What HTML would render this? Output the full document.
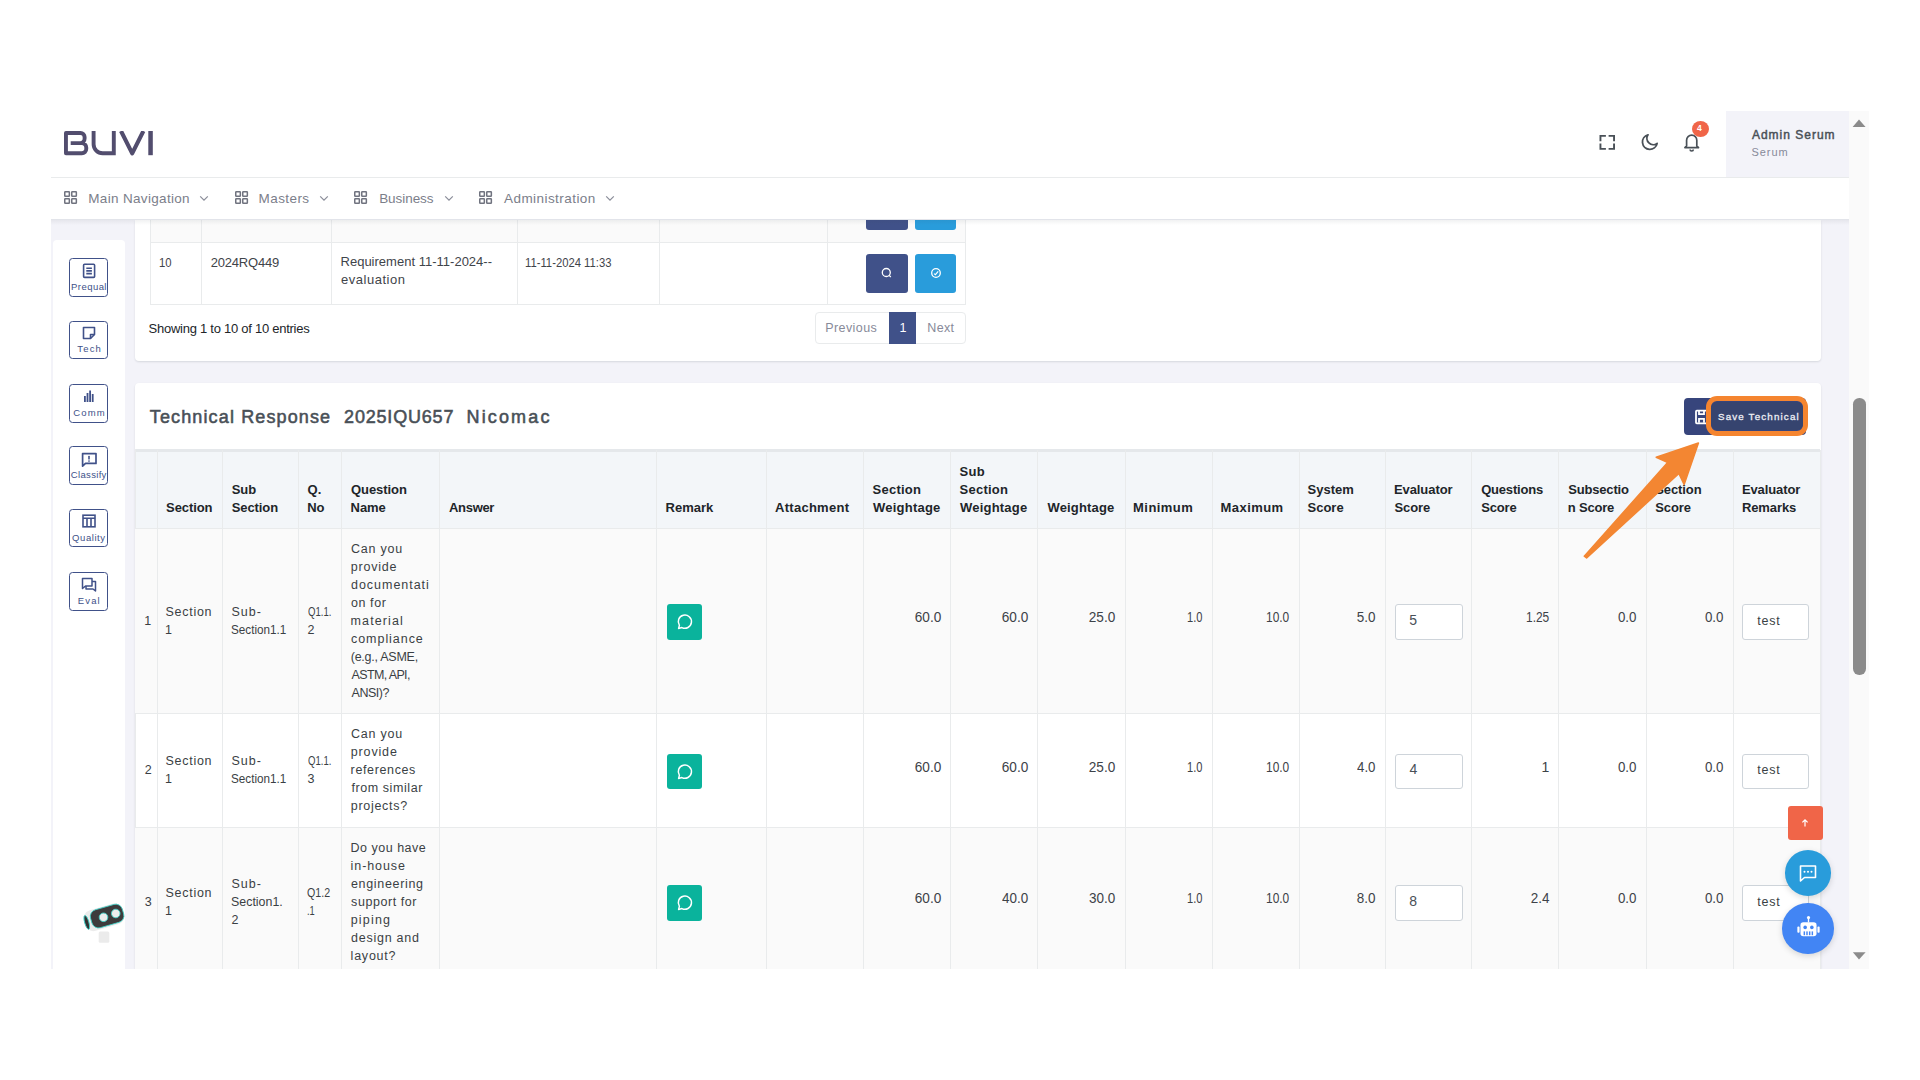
<!DOCTYPE html>
<html><head><meta charset="utf-8"><title>BUVI</title>
<style>
html,body{margin:0;padding:0;}
body{width:1920px;height:1080px;overflow:hidden;background:#fff;position:relative;font-family:"Liberation Sans",sans-serif;}
.r{position:absolute;}
.t{position:absolute;white-space:nowrap;}
</style></head><body>
<div class="r" style="left:51px;top:111px;width:1798px;height:66px;background:#fff;"></div>
<div class="r" style="left:51px;top:177px;width:1798px;height:1px;background:#e9ebec;"></div>
<div class="r" style="left:1726px;top:111px;width:123px;height:66px;background:#f3f3f9;"></div>
<div class="r" style="left:51px;top:178px;width:1798px;height:42px;background:#fff;"></div>
<div class="r" style="left:51px;top:220px;width:1798px;height:749px;background:#f3f3f9;"></div>
<div class="r" style="left:53px;top:240px;width:72px;height:729px;background:#fff;border-radius:4px 4px 0 0;"></div>
<div class="r" style="left:135px;top:220px;width:1686px;height:140.6px;background:#fff;box-shadow:0 1px 2px rgba(56,65,74,.15);border-radius:0 0 4px 4px;"></div>
<div class="r" style="left:135px;top:383px;width:1686px;height:586px;background:#fff;box-shadow:0 1px 2px rgba(56,65,74,.15);border-radius:4px 4px 0 0;"></div>
<svg class="r" style="left:64.2px;top:130.5px" width="90" height="25" viewBox="0 0 90 25">
<g fill="none" stroke="#524d6e" stroke-width="3.9">
<path d="M18,22.25 H1.95 V1.95 H16.5 A4.2,4.2 0 0 1 20.6,6.1 V7.6 A4.4,4.4 0 0 1 16.2,12.1 H6.7 M16.2,12.1 H17.8 A4.4,4.4 0 0 1 22.25,16.5 V17.9 A4.4,4.4 0 0 1 17.8,22.25" stroke-linejoin="round"/>
<path d="M29.6,0 V13.2 A9,9 0 0 0 38.6,22.25 H49.8 V0"/>
<path d="M57.0,0 L68.2,22.3 L79.4,0" stroke-width="4.1" stroke-linejoin="round"/>
</g>
<rect x="84.3" y="0" width="4.5" height="24.2" fill="#524d6e"/>
</svg>
<svg class="r" style="left:1597px;top:133px" width="20" height="20" viewBox="0 0 20 20"><g fill="none" stroke="#495057" stroke-width="1.9"><path d="M3.45,8.3 V2.85 H8.9 M11.6,2.85 H17.05 V8.3 M17.05,10.4 V15.85 H11.6 M8.9,15.85 H3.45 V10.4"/></g></svg>
<svg class="r" style="left:1639px;top:132px" width="22" height="22" viewBox="0 0 22 22"><path d="M9,2.8 A7.4,7.4 0 1 0 18.1,11.5 A6.4,6.4 0 0 1 9,2.8 Z" fill="none" stroke="#495057" stroke-width="1.8" stroke-linejoin="round"/></svg>
<svg class="r" style="left:1682px;top:132px" width="20" height="22" viewBox="0 0 20 22"><g fill="none" stroke="#495057" stroke-width="1.7" stroke-linejoin="round"><path d="M2.9,15.6 L4.6,13.9 V8.3 A5.1,5.1 0 0 1 14.8,8.3 V13.9 L16.5,15.6 Z"/><path d="M8.1,17.4 A1.6,1.6 0 0 0 11.3,17.4"/></g></svg>
<div class="r" style="left:1691.8px;top:120.8px;width:17.0px;height:16.0px;background:#f06548;border-radius:50%;"></div>
<div class="t" style="left:1697.08px;top:118px;font-size:8.5px;line-height:20px;color:#fff;font-weight:700;">4</div>
<div class="t" style="left:1751.90px;top:125px;font-size:12px;line-height:20px;color:#495057;letter-spacing:1.0px;-webkit-text-stroke:0.45px #495057;">Admin Serum</div>
<div class="t" style="left:1751.50px;top:142px;font-size:11px;line-height:20px;color:#878a99;letter-spacing:0.938px;">Serum</div>
<svg class="r" style="left:63.8px;top:191px" width="14" height="14" viewBox="0 0 14 14"><g fill="none" stroke="#70737f" stroke-width="1.5"><rect x="0.75" y="0.75" width="4.6" height="4.6" rx="0.6"/><rect x="7.75" y="0.75" width="4.6" height="4.6" rx="0.6"/><rect x="0.75" y="7.75" width="4.6" height="4.6" rx="0.6"/><rect x="7.75" y="7.75" width="4.6" height="4.6" rx="0.6"/></g></svg>
<div class="t" style="left:88.28px;top:189px;font-size:13.5px;line-height:20px;color:#7b7e8a;letter-spacing:0.325px;">Main Navigation</div>
<svg class="r" style="left:199.3px;top:194.5px" width="10" height="7" viewBox="0 0 10 7"><path d="M1.2,1.3 L5,5.1 L8.8,1.3" fill="none" stroke="#8a8d99" stroke-width="1.2"/></svg>
<svg class="r" style="left:234.8px;top:191px" width="14" height="14" viewBox="0 0 14 14"><g fill="none" stroke="#70737f" stroke-width="1.5"><rect x="0.75" y="0.75" width="4.6" height="4.6" rx="0.6"/><rect x="7.75" y="0.75" width="4.6" height="4.6" rx="0.6"/><rect x="0.75" y="7.75" width="4.6" height="4.6" rx="0.6"/><rect x="7.75" y="7.75" width="4.6" height="4.6" rx="0.6"/></g></svg>
<div class="t" style="left:258.57px;top:189px;font-size:13.5px;line-height:20px;color:#7b7e8a;letter-spacing:0.421px;">Masters</div>
<svg class="r" style="left:319.3px;top:194.5px" width="10" height="7" viewBox="0 0 10 7"><path d="M1.2,1.3 L5,5.1 L8.8,1.3" fill="none" stroke="#8a8d99" stroke-width="1.2"/></svg>
<svg class="r" style="left:354px;top:191px" width="14" height="14" viewBox="0 0 14 14"><g fill="none" stroke="#70737f" stroke-width="1.5"><rect x="0.75" y="0.75" width="4.6" height="4.6" rx="0.6"/><rect x="7.75" y="0.75" width="4.6" height="4.6" rx="0.6"/><rect x="0.75" y="7.75" width="4.6" height="4.6" rx="0.6"/><rect x="7.75" y="7.75" width="4.6" height="4.6" rx="0.6"/></g></svg>
<div class="t" style="left:379.18px;top:189px;font-size:13.5px;line-height:20px;color:#7b7e8a;letter-spacing:-0.061px;">Business</div>
<svg class="r" style="left:444.2px;top:194.5px" width="10" height="7" viewBox="0 0 10 7"><path d="M1.2,1.3 L5,5.1 L8.8,1.3" fill="none" stroke="#8a8d99" stroke-width="1.2"/></svg>
<svg class="r" style="left:478.6px;top:191px" width="14" height="14" viewBox="0 0 14 14"><g fill="none" stroke="#70737f" stroke-width="1.5"><rect x="0.75" y="0.75" width="4.6" height="4.6" rx="0.6"/><rect x="7.75" y="0.75" width="4.6" height="4.6" rx="0.6"/><rect x="0.75" y="7.75" width="4.6" height="4.6" rx="0.6"/><rect x="7.75" y="7.75" width="4.6" height="4.6" rx="0.6"/></g></svg>
<div class="t" style="left:504.00px;top:189px;font-size:13.5px;line-height:20px;color:#7b7e8a;letter-spacing:0.444px;">Administration</div>
<svg class="r" style="left:604.6px;top:194.5px" width="10" height="7" viewBox="0 0 10 7"><path d="M1.2,1.3 L5,5.1 L8.8,1.3" fill="none" stroke="#8a8d99" stroke-width="1.2"/></svg>
<div class="r" style="left:151px;top:220px;width:814px;height:22px;background:#fafafa;"></div>
<div class="r" style="left:150px;top:220px;width:1px;height:84px;background:#e9ebec;"></div>
<div class="r" style="left:201px;top:220px;width:1px;height:84px;background:#e9ebec;"></div>
<div class="r" style="left:331px;top:220px;width:1px;height:84px;background:#e9ebec;"></div>
<div class="r" style="left:517px;top:220px;width:1px;height:84px;background:#e9ebec;"></div>
<div class="r" style="left:659px;top:220px;width:1px;height:84px;background:#e9ebec;"></div>
<div class="r" style="left:827px;top:220px;width:1px;height:84px;background:#e9ebec;"></div>
<div class="r" style="left:965px;top:220px;width:1px;height:84px;background:#e9ebec;"></div>
<div class="r" style="left:150px;top:242px;width:816px;height:1px;background:#e9ebec;"></div>
<div class="r" style="left:150px;top:304px;width:816px;height:1px;background:#e9ebec;"></div>
<div class="r" style="left:866px;top:220px;width:42px;height:10px;background:#405189;border-radius:0 0 3px 3px;"></div>
<div class="r" style="left:915px;top:220px;width:41px;height:10px;background:#299cdb;border-radius:0 0 3px 3px;"></div>
<div class="t" style="left:158.63px;top:253px;font-size:13px;line-height:20px;color:#3f444a;transform:scaleX(0.8692);transform-origin:left center;">10</div>
<div class="t" style="left:210.68px;top:253px;font-size:13px;line-height:20px;color:#3f444a;letter-spacing:-0.184px;">2024RQ449</div>
<div class="t" style="left:340.50px;top:252px;font-size:13px;line-height:20px;color:#3f444a;letter-spacing:0.011px;">Requirement 11-11-2024--</div>
<div class="t" style="left:341.00px;top:270px;font-size:13px;line-height:20px;color:#3f444a;letter-spacing:0.514px;">evaluation</div>
<div class="t" style="left:525.38px;top:253px;font-size:13px;line-height:20px;color:#3f444a;transform:scaleX(0.8662);transform-origin:left center;">11-11-2024 11:33</div>
<div class="r" style="left:866px;top:254px;width:42px;height:38.5px;background:#405189;border-radius:3px;"></div>
<div class="r" style="left:915px;top:254px;width:41px;height:38.5px;background:#299cdb;border-radius:3px;"></div>
<svg class="r" style="left:880px;top:266px" width="14" height="14" viewBox="0 0 14 14"><circle cx="6.3" cy="6.5" r="4" fill="none" stroke="#fff" stroke-width="1.3"/><path d="M9.2,9.4 L10.8,11" stroke="#fff" stroke-width="1.3"/></svg>
<svg class="r" style="left:928.5px;top:265.5px" width="14" height="14" viewBox="0 0 14 14"><circle cx="7" cy="7" r="4.3" fill="none" stroke="#fff" stroke-width="1.3"/><path d="M5,7.6 L6.4,8.7 L9.2,5.4" fill="none" stroke="#fff" stroke-width="1.2"/></svg>
<div class="t" style="left:148.57px;top:319px;font-size:13px;line-height:20px;color:#212529;letter-spacing:-0.259px;">Showing 1 to 10 of 10 entries</div>
<div class="r" style="left:814.5px;top:312.3px;width:151.0px;height:31.4px;background:#fff;border:1px solid #e9ebec;border-radius:4px;box-sizing:border-box;"></div>
<div class="r" style="left:888.75px;top:312.3px;width:27.25px;height:31.4px;background:#405189;"></div>
<div class="t" style="left:825.25px;top:318px;font-size:12.5px;line-height:20px;color:#878a99;letter-spacing:0.411px;">Previous</div>
<div class="t" style="left:899.40px;top:318px;font-size:12.5px;line-height:20px;color:#fff;">1</div>
<div class="t" style="left:927.30px;top:318px;font-size:12.5px;line-height:20px;color:#878a99;letter-spacing:0.358px;">Next</div>
<div class="r" style="left:69.3px;top:258px;width:39.1px;height:38.5px;background:transparent;border:1.85px solid #405189;border-radius:3.5px;box-sizing:border-box;"></div>
<div class="t" style="left:71.10px;top:277px;font-size:9.5px;line-height:20px;color:#405189;letter-spacing:0.438px;">Prequal</div>
<div class="r" style="left:69.3px;top:320.5px;width:39.1px;height:38.5px;background:transparent;border:1.85px solid #405189;border-radius:3.5px;box-sizing:border-box;"></div>
<div class="t" style="left:77.35px;top:339px;font-size:9.5px;line-height:20px;color:#405189;letter-spacing:1.125px;">Tech</div>
<div class="r" style="left:69.3px;top:384px;width:39.1px;height:38.5px;background:transparent;border:1.85px solid #405189;border-radius:3.5px;box-sizing:border-box;"></div>
<div class="t" style="left:73.35px;top:403px;font-size:9.5px;line-height:20px;color:#405189;letter-spacing:1.083px;">Comm</div>
<div class="r" style="left:69.3px;top:446.2px;width:39.1px;height:38.5px;background:transparent;border:1.85px solid #405189;border-radius:3.5px;box-sizing:border-box;"></div>
<div class="t" style="left:70.85px;top:465px;font-size:9.5px;line-height:20px;color:#405189;letter-spacing:0.321px;">Classify</div>
<div class="r" style="left:69.3px;top:508.8px;width:39.1px;height:38.5px;background:transparent;border:1.85px solid #405189;border-radius:3.5px;box-sizing:border-box;"></div>
<div class="t" style="left:72.10px;top:528px;font-size:9.5px;line-height:20px;color:#405189;letter-spacing:0.562px;">Quality</div>
<div class="r" style="left:69.3px;top:572.2px;width:39.1px;height:38.5px;background:transparent;border:1.85px solid #405189;border-radius:3.5px;box-sizing:border-box;"></div>
<div class="t" style="left:77.85px;top:591px;font-size:9.5px;line-height:20px;color:#405189;letter-spacing:1.125px;">Eval</div>
<svg class="r" style="left:81px;top:262px" width="16" height="17" viewBox="0 0 16 17"><g fill="none" stroke="#405189" stroke-width="1.6"><rect x="2.6" y="2.2" width="11" height="13.2" rx="1"/><path d="M5.3,6.2 H10.9 M5.3,8.9 H10.9 M5.3,11.6 H10.9"/></g></svg>
<svg class="r" style="left:81px;top:325px" width="16" height="16" viewBox="0 0 16 16"><g fill="none" stroke="#405189" stroke-width="1.6" stroke-linejoin="round"><path d="M2.5,2.5 H13.5 V9.5 L9.5,13.5 H2.5 Z"/><path d="M13.5,9.5 H9.5 V13.5"/></g></svg>
<svg class="r" style="left:81px;top:388px" width="16" height="16" viewBox="0 0 16 16"><g fill="#405189"><rect x="3" y="8" width="1.8" height="6"/><rect x="5.6" y="5" width="1.8" height="9"/><rect x="8.2" y="2.5" width="1.8" height="11.5"/><rect x="10.8" y="6" width="1.8" height="8"/></g></svg>
<svg class="r" style="left:81px;top:450px" width="18" height="18" viewBox="0 0 18 18"><g fill="none" stroke="#405189" stroke-width="1.7" stroke-linejoin="round"><path d="M1.6,3.6 H15 V13.4 H4.5 L1.6,16.2 Z"/></g><rect x="7.2" y="5.7" width="1.6" height="3.8" rx="0.6" fill="#405189"/><rect x="7.2" y="10.3" width="1.6" height="1.5" rx="0.6" fill="#405189"/></svg>
<svg class="r" style="left:81px;top:513px" width="16" height="16" viewBox="0 0 16 16"><g fill="none" stroke="#405189" stroke-width="1.6"><rect x="2" y="2.2" width="12" height="11.6"/><path d="M2,5.3 H14 M6,5.3 V13.8 M10,5.3 V13.8"/></g></svg>
<svg class="r" style="left:81px;top:577px" width="17" height="16" viewBox="0 0 17 16"><g fill="none" stroke="#405189" stroke-width="1.5" stroke-linejoin="round"><path d="M1.5,1.5 H11 V9 H4.5 L1.5,11.5 Z"/><path d="M11,4.5 H14.5 V14 L12,12 H5 V9"/></g></svg>
<svg class="r" style="left:80px;top:897px" width="50" height="50" viewBox="0 0 50 50">
<g transform="rotate(-16 27 19)">
<rect x="3.5" y="8.6" width="40.5" height="21.5" rx="8.5" fill="#ececec"/>
<rect x="10.6" y="9.8" width="33" height="18.6" rx="6.8" fill="#3d3b3c" stroke="#40cfc6" stroke-width="0.8"/>
<circle cx="23.3" cy="19.3" r="4.3" fill="#ededed" stroke="#40cfc6" stroke-width="0.8"/>
<circle cx="36.1" cy="19.0" r="4.3" fill="#ededed" stroke="#40cfc6" stroke-width="0.8"/>
<ellipse cx="5.8" cy="19.6" rx="2.1" ry="7.2" fill="#333" stroke="#40cfc6" stroke-width="0.9"/>
</g>
<rect x="18.7" y="34.6" width="10.6" height="11.1" rx="1.5" fill="#ebebeb"/>
</svg>
<div class="t" style="left:149.82px;top:407px;font-size:18px;line-height:20px;color:#495057;letter-spacing:1.129px;-webkit-text-stroke:0.55px #495057;">Technical Response</div>
<div class="t" style="left:344.12px;top:407px;font-size:18px;line-height:20px;color:#495057;letter-spacing:0.803px;-webkit-text-stroke:0.55px #495057;">2025IQU657</div>
<div class="t" style="left:466.50px;top:407px;font-size:18px;line-height:20px;color:#495057;letter-spacing:2.15px;-webkit-text-stroke:0.55px #495057;">Nicomac</div>
<div class="r" style="left:1684.3px;top:397.7px;width:121.7px;height:37.3px;background:#37457c;border-radius:4px;"></div>
<svg class="r" style="left:1693px;top:408px" width="16" height="17" viewBox="0 0 16 17"><g fill="none" stroke="#fff" stroke-width="1.8"><rect x="3" y="2.7" width="11" height="12.6" rx="0.8"/><path d="M6,3 V6.2 H11 V3 M6,14.8 V10.8 H11 V14.8"/></g></svg>
<div class="r" style="left:1705.8px;top:396.2px;width:102.5px;height:39.5px;background:transparent;border:5.3px solid #f5852f;border-radius:11px;box-sizing:border-box;"></div>
<div class="r" style="left:1711.1px;top:401.5px;width:91.9px;height:28.9px;background:#36446f;border-radius:6.5px;"></div>
<div class="t" style="left:1718.00px;top:407px;font-size:9.8px;line-height:20px;color:#eceef4;letter-spacing:1.15px;-webkit-text-stroke:0.3px #eceef4;">Save Technical</div>
<div class="r" style="left:135px;top:450px;width:1685px;height:78px;background:#f3f6f9;"></div>
<div class="r" style="left:134.5px;top:449.4px;width:1685.5px;height:2.3px;background:#e5e8eb;"></div>
<div class="r" style="left:134.5px;top:449.4px;width:1.1px;height:519.6px;background:#e9ebec;"></div>
<div class="r" style="left:135px;top:529px;width:1685px;height:184px;background:#fafafa;"></div>
<div class="r" style="left:135px;top:828px;width:1685px;height:141px;background:#fafafa;"></div>
<div class="r" style="left:157px;top:450px;width:1px;height:519px;background:#e9ebec;"></div>
<div class="r" style="left:222px;top:450px;width:1px;height:519px;background:#e9ebec;"></div>
<div class="r" style="left:298px;top:450px;width:1px;height:519px;background:#e9ebec;"></div>
<div class="r" style="left:341px;top:450px;width:1px;height:519px;background:#e9ebec;"></div>
<div class="r" style="left:439px;top:450px;width:1px;height:519px;background:#e9ebec;"></div>
<div class="r" style="left:656px;top:450px;width:1px;height:519px;background:#e9ebec;"></div>
<div class="r" style="left:766px;top:450px;width:1px;height:519px;background:#e9ebec;"></div>
<div class="r" style="left:863px;top:450px;width:1px;height:519px;background:#e9ebec;"></div>
<div class="r" style="left:950px;top:450px;width:1px;height:519px;background:#e9ebec;"></div>
<div class="r" style="left:1037px;top:450px;width:1px;height:519px;background:#e9ebec;"></div>
<div class="r" style="left:1125px;top:450px;width:1px;height:519px;background:#e9ebec;"></div>
<div class="r" style="left:1212px;top:450px;width:1px;height:519px;background:#e9ebec;"></div>
<div class="r" style="left:1299px;top:450px;width:1px;height:519px;background:#e9ebec;"></div>
<div class="r" style="left:1385px;top:450px;width:1px;height:519px;background:#e9ebec;"></div>
<div class="r" style="left:1471px;top:450px;width:1px;height:519px;background:#e9ebec;"></div>
<div class="r" style="left:1558px;top:450px;width:1px;height:519px;background:#e9ebec;"></div>
<div class="r" style="left:1646px;top:450px;width:1px;height:519px;background:#e9ebec;"></div>
<div class="r" style="left:1733px;top:450px;width:1px;height:519px;background:#e9ebec;"></div>
<div class="r" style="left:1820px;top:450px;width:1px;height:519px;background:#e9ebec;"></div>
<div class="r" style="left:135px;top:528px;width:1685px;height:1px;background:#e9ebec;"></div>
<div class="r" style="left:135px;top:713px;width:1685px;height:1px;background:#e9ebec;"></div>
<div class="r" style="left:135px;top:827px;width:1685px;height:1px;background:#e9ebec;"></div>
<div class="t" style="left:166.12px;top:498px;font-size:13px;line-height:20px;color:#212529;font-weight:700;letter-spacing:-0.092px;">Section</div>
<div class="t" style="left:231.72px;top:480px;font-size:13px;line-height:20px;color:#212529;font-weight:700;letter-spacing:-0.092px;">Sub</div>
<div class="t" style="left:231.72px;top:498px;font-size:13px;line-height:20px;color:#212529;font-weight:700;letter-spacing:-0.092px;">Section</div>
<div class="t" style="left:307.60px;top:480px;font-size:13px;line-height:20px;color:#212529;font-weight:700;">Q.</div>
<div class="t" style="left:307.23px;top:498px;font-size:13px;line-height:20px;color:#212529;font-weight:700;">No</div>
<div class="t" style="left:351.00px;top:480px;font-size:13px;line-height:20px;color:#212529;font-weight:700;letter-spacing:-0.071px;">Question</div>
<div class="t" style="left:350.62px;top:498px;font-size:13px;line-height:20px;color:#212529;font-weight:700;letter-spacing:-0.071px;">Name</div>
<div class="t" style="left:449.02px;top:498px;font-size:13px;line-height:20px;color:#212529;font-weight:700;letter-spacing:-0.315px;">Answer</div>
<div class="t" style="left:665.62px;top:498px;font-size:13px;line-height:20px;color:#212529;font-weight:700;letter-spacing:-0.015px;">Remark</div>
<div class="t" style="left:775.02px;top:498px;font-size:13px;line-height:20px;color:#212529;font-weight:700;letter-spacing:0.275px;">Attachment</div>
<div class="t" style="left:872.62px;top:480px;font-size:13px;line-height:20px;color:#212529;font-weight:700;letter-spacing:0.225px;">Section</div>
<div class="t" style="left:873.00px;top:498px;font-size:13px;line-height:20px;color:#212529;font-weight:700;letter-spacing:0.225px;">Weightage</div>
<div class="t" style="left:959.62px;top:462px;font-size:13px;line-height:20px;color:#212529;font-weight:700;letter-spacing:0.213px;">Sub</div>
<div class="t" style="left:959.62px;top:480px;font-size:13px;line-height:20px;color:#212529;font-weight:700;letter-spacing:0.213px;">Section</div>
<div class="t" style="left:960.00px;top:498px;font-size:13px;line-height:20px;color:#212529;font-weight:700;letter-spacing:0.213px;">Weightage</div>
<div class="t" style="left:1047.50px;top:498px;font-size:13px;line-height:20px;color:#212529;font-weight:700;letter-spacing:0.156px;">Weightage</div>
<div class="t" style="left:1133.12px;top:498px;font-size:13px;line-height:20px;color:#212529;font-weight:700;letter-spacing:0.421px;">Minimum</div>
<div class="t" style="left:1220.62px;top:498px;font-size:13px;line-height:20px;color:#212529;font-weight:700;letter-spacing:0.425px;">Maximum</div>
<div class="t" style="left:1307.53px;top:480px;font-size:13px;line-height:20px;color:#212529;font-weight:700;">System</div>
<div class="t" style="left:1307.53px;top:498px;font-size:13px;line-height:20px;color:#212529;font-weight:700;">Score</div>
<div class="t" style="left:1393.92px;top:480px;font-size:13px;line-height:20px;color:#212529;font-weight:700;letter-spacing:-0.069px;">Evaluator</div>
<div class="t" style="left:1394.42px;top:498px;font-size:13px;line-height:20px;color:#212529;font-weight:700;letter-spacing:-0.069px;">Score</div>
<div class="t" style="left:1481.20px;top:480px;font-size:13px;line-height:20px;color:#212529;font-weight:700;letter-spacing:-0.203px;">Questions</div>
<div class="t" style="left:1481.33px;top:498px;font-size:13px;line-height:20px;color:#212529;font-weight:700;letter-spacing:-0.203px;">Score</div>
<div class="t" style="left:1568.33px;top:480px;font-size:13px;line-height:20px;color:#212529;font-weight:700;letter-spacing:-0.197px;">Subsectio</div>
<div class="t" style="left:1567.83px;top:498px;font-size:13px;line-height:20px;color:#212529;font-weight:700;letter-spacing:-0.197px;">n Score</div>
<div class="t" style="left:1655.22px;top:480px;font-size:13px;line-height:20px;color:#212529;font-weight:700;letter-spacing:-0.092px;">Section</div>
<div class="t" style="left:1655.22px;top:498px;font-size:13px;line-height:20px;color:#212529;font-weight:700;letter-spacing:-0.092px;">Score</div>
<div class="t" style="left:1741.92px;top:480px;font-size:13px;line-height:20px;color:#212529;font-weight:700;letter-spacing:-0.094px;">Evaluator</div>
<div class="t" style="left:1741.92px;top:498px;font-size:13px;line-height:20px;color:#212529;font-weight:700;letter-spacing:-0.094px;">Remarks</div>
<div class="t" style="left:144.30px;top:611px;font-size:12.5px;line-height:20px;color:#3a3f44;">1</div>
<div class="t" style="left:165.47px;top:602px;font-size:12.5px;line-height:20px;color:#3a3f44;letter-spacing:0.725px;">Section</div>
<div class="t" style="left:165.10px;top:620px;font-size:12.5px;line-height:20px;color:#3a3f44;">1</div>
<div class="t" style="left:231.38px;top:602px;font-size:12.5px;line-height:20px;color:#3a3f44;letter-spacing:1.05px;">Sub-</div>
<div class="t" style="left:231.41px;top:620px;font-size:12.5px;line-height:20px;color:#3a3f44;transform:scaleX(0.9365);transform-origin:left center;">Section1.1</div>
<div class="t" style="left:307.52px;top:602px;font-size:12.5px;line-height:20px;color:#3a3f44;transform:scaleX(0.7654);transform-origin:left center;">Q1.1.</div>
<div class="t" style="left:307.38px;top:620px;font-size:12.5px;line-height:20px;color:#3a3f44;">2</div>
<div class="t" style="left:350.88px;top:539px;font-size:12.5px;line-height:20px;color:#3a3f44;letter-spacing:0.796px;">Can you</div>
<div class="t" style="left:350.75px;top:557px;font-size:12.5px;line-height:20px;color:#3a3f44;letter-spacing:0.796px;">provide</div>
<div class="t" style="left:351.00px;top:575px;font-size:12.5px;line-height:20px;color:#3a3f44;letter-spacing:0.972px;">documentati</div>
<div class="t" style="left:351.00px;top:593px;font-size:12.5px;line-height:20px;color:#3a3f44;letter-spacing:0.57px;">on for</div>
<div class="t" style="left:350.62px;top:611px;font-size:12.5px;line-height:20px;color:#3a3f44;letter-spacing:1.093px;">material</div>
<div class="t" style="left:351.00px;top:629px;font-size:12.5px;line-height:20px;color:#3a3f44;letter-spacing:0.953px;">compliance</div>
<div class="t" style="left:350.75px;top:647px;font-size:12.5px;line-height:20px;color:#3a3f44;letter-spacing:-0.252px;">(e.g., ASME,</div>
<div class="t" style="left:351.50px;top:665px;font-size:12.5px;line-height:20px;color:#3a3f44;letter-spacing:-0.633px;">ASTM, API,</div>
<div class="t" style="left:351.50px;top:683px;font-size:12.5px;line-height:20px;color:#3a3f44;letter-spacing:-0.455px;">ANSI)?</div>
<div class="r" style="left:667.3px;top:604.0px;width:34.7px;height:35.6px;background:#0ab39c;border-radius:3px;"></div>
<svg class="r" style="left:674.6px;top:613.2px" width="19" height="19" viewBox="0 0 19 19"><path d="M3.6,15.4 L4.4,12.4 A6.6,6.6 0 1 1 6.9,14.6 Z" fill="none" stroke="#fff" stroke-width="1.5" stroke-linejoin="round"/></svg>
<div class="t" style="right:979.01px;text-align:right;top:607px;font-size:14px;line-height:20px;color:#3d4248;transform:scaleX(0.9731);transform-origin:right center;">60.0</div>
<div class="t" style="right:892.01px;text-align:right;top:607px;font-size:14px;line-height:20px;color:#3d4248;transform:scaleX(0.9731);transform-origin:right center;">60.0</div>
<div class="t" style="right:804.91px;text-align:right;top:607px;font-size:14px;line-height:20px;color:#3d4248;transform:scaleX(0.9731);transform-origin:right center;">25.0</div>
<div class="t" style="right:718.03px;text-align:right;top:607px;font-size:14px;line-height:20px;color:#3d4248;transform:scaleX(0.7944);transform-origin:right center;">1.0</div>
<div class="t" style="right:631.07px;text-align:right;top:607px;font-size:14px;line-height:20px;color:#3d4248;transform:scaleX(0.8524);transform-origin:right center;">10.0</div>
<div class="t" style="right:544.23px;text-align:right;top:607px;font-size:14px;line-height:20px;color:#3d4248;transform:scaleX(0.9616);transform-origin:right center;">5.0</div>
<div class="r" style="left:1395.3px;top:604.0px;width:67.3px;height:35.6px;background:#fff;border:1px solid #ced4da;border-radius:3px;box-sizing:border-box;"></div>
<div class="t" style="left:1409.17px;top:610px;font-size:14px;line-height:20px;color:#495057;">5</div>
<div class="t" style="right:370.87px;text-align:right;top:607px;font-size:14px;line-height:20px;color:#3d4248;transform:scaleX(0.8524);transform-origin:right center;">1.25</div>
<div class="t" style="right:283.54px;text-align:right;top:607px;font-size:14px;line-height:20px;color:#3d4248;transform:scaleX(0.9524);transform-origin:right center;">0.0</div>
<div class="t" style="right:196.44px;text-align:right;top:607px;font-size:14px;line-height:20px;color:#3d4248;transform:scaleX(0.9524);transform-origin:right center;">0.0</div>
<div class="r" style="left:1742.3px;top:604.0px;width:67.2px;height:35.5px;background:#fff;border:1px solid #ced4da;border-radius:3px;box-sizing:border-box;"></div>
<div class="t" style="left:1757.17px;top:611px;font-size:12.5px;line-height:20px;color:#3a3f44;letter-spacing:0.775px;">test</div>
<div class="t" style="left:144.68px;top:760px;font-size:12.5px;line-height:20px;color:#3a3f44;">2</div>
<div class="t" style="left:165.47px;top:751px;font-size:12.5px;line-height:20px;color:#3a3f44;letter-spacing:0.725px;">Section</div>
<div class="t" style="left:165.10px;top:769px;font-size:12.5px;line-height:20px;color:#3a3f44;">1</div>
<div class="t" style="left:231.38px;top:751px;font-size:12.5px;line-height:20px;color:#3a3f44;letter-spacing:1.05px;">Sub-</div>
<div class="t" style="left:231.41px;top:769px;font-size:12.5px;line-height:20px;color:#3a3f44;transform:scaleX(0.9365);transform-origin:left center;">Section1.1</div>
<div class="t" style="left:307.52px;top:751px;font-size:12.5px;line-height:20px;color:#3a3f44;transform:scaleX(0.7654);transform-origin:left center;">Q1.1.</div>
<div class="t" style="left:307.50px;top:769px;font-size:12.5px;line-height:20px;color:#3a3f44;">3</div>
<div class="t" style="left:350.88px;top:724px;font-size:12.5px;line-height:20px;color:#3a3f44;letter-spacing:0.779px;">Can you</div>
<div class="t" style="left:350.75px;top:742px;font-size:12.5px;line-height:20px;color:#3a3f44;letter-spacing:0.854px;">provide</div>
<div class="t" style="left:350.62px;top:760px;font-size:12.5px;line-height:20px;color:#3a3f44;letter-spacing:0.631px;">references</div>
<div class="t" style="left:351.38px;top:778px;font-size:12.5px;line-height:20px;color:#3a3f44;letter-spacing:0.586px;">from similar</div>
<div class="t" style="left:350.75px;top:796px;font-size:12.5px;line-height:20px;color:#3a3f44;letter-spacing:0.713px;">projects?</div>
<div class="r" style="left:667.3px;top:753.5px;width:34.7px;height:35.6px;background:#0ab39c;border-radius:3px;"></div>
<svg class="r" style="left:674.6px;top:762.7px" width="19" height="19" viewBox="0 0 19 19"><path d="M3.6,15.4 L4.4,12.4 A6.6,6.6 0 1 1 6.9,14.6 Z" fill="none" stroke="#fff" stroke-width="1.5" stroke-linejoin="round"/></svg>
<div class="t" style="right:979.01px;text-align:right;top:757px;font-size:14px;line-height:20px;color:#3d4248;transform:scaleX(0.9731);transform-origin:right center;">60.0</div>
<div class="t" style="right:892.01px;text-align:right;top:757px;font-size:14px;line-height:20px;color:#3d4248;transform:scaleX(0.9731);transform-origin:right center;">60.0</div>
<div class="t" style="right:804.91px;text-align:right;top:757px;font-size:14px;line-height:20px;color:#3d4248;transform:scaleX(0.9731);transform-origin:right center;">25.0</div>
<div class="t" style="right:718.03px;text-align:right;top:757px;font-size:14px;line-height:20px;color:#3d4248;transform:scaleX(0.7944);transform-origin:right center;">1.0</div>
<div class="t" style="right:631.07px;text-align:right;top:757px;font-size:14px;line-height:20px;color:#3d4248;transform:scaleX(0.8524);transform-origin:right center;">10.0</div>
<div class="t" style="right:544.24px;text-align:right;top:757px;font-size:14px;line-height:20px;color:#3d4248;transform:scaleX(0.9486);transform-origin:right center;">4.0</div>
<div class="r" style="left:1395.3px;top:753.5px;width:67.3px;height:35.6px;background:#fff;border:1px solid #ced4da;border-radius:3px;box-sizing:border-box;"></div>
<div class="t" style="left:1409.42px;top:759px;font-size:14px;line-height:20px;color:#495057;">4</div>
<div class="t" style="right:370.64px;text-align:right;top:757px;font-size:14px;line-height:20px;color:#3d4248;">1</div>
<div class="t" style="right:283.54px;text-align:right;top:757px;font-size:14px;line-height:20px;color:#3d4248;transform:scaleX(0.9524);transform-origin:right center;">0.0</div>
<div class="t" style="right:196.44px;text-align:right;top:757px;font-size:14px;line-height:20px;color:#3d4248;transform:scaleX(0.9524);transform-origin:right center;">0.0</div>
<div class="r" style="left:1742.3px;top:753.5px;width:67.2px;height:35.5px;background:#fff;border:1px solid #ced4da;border-radius:3px;box-sizing:border-box;"></div>
<div class="t" style="left:1757.17px;top:760px;font-size:12.5px;line-height:20px;color:#3a3f44;letter-spacing:0.775px;">test</div>
<div class="t" style="left:144.80px;top:892px;font-size:12.5px;line-height:20px;color:#3a3f44;">3</div>
<div class="t" style="left:165.47px;top:883px;font-size:12.5px;line-height:20px;color:#3a3f44;letter-spacing:0.725px;">Section</div>
<div class="t" style="left:165.10px;top:901px;font-size:12.5px;line-height:20px;color:#3a3f44;">1</div>
<div class="t" style="left:231.38px;top:874px;font-size:12.5px;line-height:20px;color:#3a3f44;letter-spacing:1.05px;">Sub-</div>
<div class="t" style="left:231.38px;top:892px;font-size:12.5px;line-height:20px;color:#3a3f44;transform:scaleX(0.9926);transform-origin:left center;">Section1.</div>
<div class="t" style="left:231.38px;top:910px;font-size:12.5px;line-height:20px;color:#3a3f44;">2</div>
<div class="t" style="left:307.47px;top:883px;font-size:12.5px;line-height:20px;color:#3a3f44;transform:scaleX(0.8502);transform-origin:left center;">Q1.2</div>
<div class="t" style="left:307.16px;top:901px;font-size:12.5px;line-height:20px;color:#3a3f44;transform:scaleX(0.7429);transform-origin:left center;">.1</div>
<div class="t" style="left:350.50px;top:838px;font-size:12.5px;line-height:20px;color:#3a3f44;letter-spacing:0.508px;">Do you have</div>
<div class="t" style="left:350.62px;top:856px;font-size:12.5px;line-height:20px;color:#3a3f44;letter-spacing:0.914px;">in-house</div>
<div class="t" style="left:351.00px;top:874px;font-size:12.5px;line-height:20px;color:#3a3f44;letter-spacing:0.67px;">engineering</div>
<div class="t" style="left:351.12px;top:892px;font-size:12.5px;line-height:20px;color:#3a3f44;letter-spacing:0.565px;">support for</div>
<div class="t" style="left:350.75px;top:910px;font-size:12.5px;line-height:20px;color:#3a3f44;letter-spacing:1.17px;">piping</div>
<div class="t" style="left:351.00px;top:928px;font-size:12.5px;line-height:20px;color:#3a3f44;letter-spacing:0.758px;">design and</div>
<div class="t" style="left:350.62px;top:946px;font-size:12.5px;line-height:20px;color:#3a3f44;letter-spacing:0.767px;">layout?</div>
<div class="r" style="left:667.3px;top:885.0px;width:34.7px;height:35.6px;background:#0ab39c;border-radius:3px;"></div>
<svg class="r" style="left:674.6px;top:894.2px" width="19" height="19" viewBox="0 0 19 19"><path d="M3.6,15.4 L4.4,12.4 A6.6,6.6 0 1 1 6.9,14.6 Z" fill="none" stroke="#fff" stroke-width="1.5" stroke-linejoin="round"/></svg>
<div class="t" style="right:979.01px;text-align:right;top:888px;font-size:14px;line-height:20px;color:#3d4248;transform:scaleX(0.9731);transform-origin:right center;">60.0</div>
<div class="t" style="right:892.02px;text-align:right;top:888px;font-size:14px;line-height:20px;color:#3d4248;transform:scaleX(0.9592);transform-origin:right center;">40.0</div>
<div class="t" style="right:804.92px;text-align:right;top:888px;font-size:14px;line-height:20px;color:#3d4248;transform:scaleX(0.9638);transform-origin:right center;">30.0</div>
<div class="t" style="right:718.03px;text-align:right;top:888px;font-size:14px;line-height:20px;color:#3d4248;transform:scaleX(0.7944);transform-origin:right center;">1.0</div>
<div class="t" style="right:631.07px;text-align:right;top:888px;font-size:14px;line-height:20px;color:#3d4248;transform:scaleX(0.8524);transform-origin:right center;">10.0</div>
<div class="t" style="right:544.23px;text-align:right;top:888px;font-size:14px;line-height:20px;color:#3d4248;transform:scaleX(0.9616);transform-origin:right center;">8.0</div>
<div class="r" style="left:1395.3px;top:885.0px;width:67.3px;height:35.6px;background:#fff;border:1px solid #ced4da;border-radius:3px;box-sizing:border-box;"></div>
<div class="t" style="left:1409.17px;top:891px;font-size:14px;line-height:20px;color:#495057;">8</div>
<div class="t" style="right:370.85px;text-align:right;top:888px;font-size:14px;line-height:20px;color:#3d4248;transform:scaleX(0.9616);transform-origin:right center;">2.4</div>
<div class="t" style="right:283.54px;text-align:right;top:888px;font-size:14px;line-height:20px;color:#3d4248;transform:scaleX(0.9524);transform-origin:right center;">0.0</div>
<div class="t" style="right:196.44px;text-align:right;top:888px;font-size:14px;line-height:20px;color:#3d4248;transform:scaleX(0.9524);transform-origin:right center;">0.0</div>
<div class="r" style="left:1742.3px;top:885.0px;width:67.2px;height:35.5px;background:#fff;border:1px solid #ced4da;border-radius:3px;box-sizing:border-box;"></div>
<div class="t" style="left:1757.17px;top:892px;font-size:12.5px;line-height:20px;color:#3a3f44;letter-spacing:0.775px;">test</div>
<svg class="r" style="left:0;top:0" width="1920" height="1080" viewBox="0 0 1920 1080"><path d="M1584.3,556.2 L1667.9,462.4 L1656.2,457.2 L1698.4,443 L1684.1,484.5 L1678.9,473.4 L1586.6,557.9 Z" fill="#f38632" stroke="#f38632" stroke-width="1.6" stroke-linejoin="round"/></svg>
<div class="r" style="left:1788px;top:806.3px;width:34.5px;height:34.2px;background:#f06548;border-radius:3px;"></div>
<svg class="r" style="left:1799px;top:817px" width="12" height="12" viewBox="0 0 12 12"><path d="M6,9.6 V3 M3.4,5.4 L6,2.8 L8.6,5.4" fill="none" stroke="#fff" stroke-width="1.2"/></svg>
<div class="r" style="left:1785px;top:850.3px;width:46px;height:45.7px;background:#299cdb;border-radius:50%;box-shadow:0 2px 6px rgba(0,0,0,.15);"></div>
<svg class="r" style="left:1797px;top:862px" width="22" height="22" viewBox="0 0 22 22"><path d="M3.5,4 H18.5 V15.5 H7.5 L3.5,19 Z" fill="none" stroke="#fff" stroke-width="1.6" stroke-linejoin="round"/><g fill="#fff"><circle cx="7.5" cy="9.8" r="1"/><circle cx="11" cy="9.8" r="1"/><circle cx="14.5" cy="9.8" r="1"/></g></svg>
<div class="r" style="left:1782.2px;top:903px;width:51.4px;height:50.5px;background:#4285f4;border-radius:50%;box-shadow:0 2px 6px rgba(0,0,0,.15);"></div>
<svg class="r" style="left:1793.5px;top:913.5px" width="29" height="29" viewBox="0 0 26 26"><g fill="#fff">
<circle cx="13" cy="3.2" r="1.4"/><rect x="12.4" y="3.5" width="1.2" height="4"/>
<rect x="5.8" y="7.5" width="14.4" height="12.5" rx="2.5"/>
<rect x="3" y="11.2" width="2" height="5.5" rx="0.8"/><rect x="21" y="11.2" width="2" height="5.5" rx="0.8"/>
</g><g fill="#4285f4"><circle cx="10" cy="12" r="1.6"/><circle cx="16" cy="12" r="1.6"/>
<rect x="8.6" y="15.6" width="1.3" height="3.4"/><rect x="11" y="15.6" width="1.3" height="3.4"/><rect x="13.4" y="15.6" width="1.3" height="3.4"/><rect x="15.8" y="15.6" width="1.3" height="3.4"/></g></svg>
<div class="r" style="left:51px;top:219px;width:1798px;height:1px;background:#e2e4ea;"></div>
<div class="r" style="left:51px;top:220px;width:1798px;height:5px;background:linear-gradient(rgba(56,65,74,.07),rgba(56,65,74,0));"></div>
<div class="r" style="left:0px;top:969px;width:1920px;height:111px;background:#fff;"></div>
<div class="r" style="left:1849px;top:111px;width:20px;height:858px;background:#fafafa;"></div>
<div class="r" style="left:1853px;top:397.8px;width:12.5px;height:277.4px;background:#8b8b8b;border-radius:6.25px;"></div>
<svg class="r" style="left:1849px;top:111px" width="20" height="20" viewBox="0 0 20 20"><path d="M3.6,15.9 L10,8.6 L16.6,15.9 Z" fill="#8b8b8b"/></svg>
<svg class="r" style="left:1849px;top:949px" width="20" height="20" viewBox="0 0 20 20"><path d="M3.9,3.3 L10,10.5 L16.6,3.3 Z" fill="#8b8b8b"/></svg>
</body></html>
